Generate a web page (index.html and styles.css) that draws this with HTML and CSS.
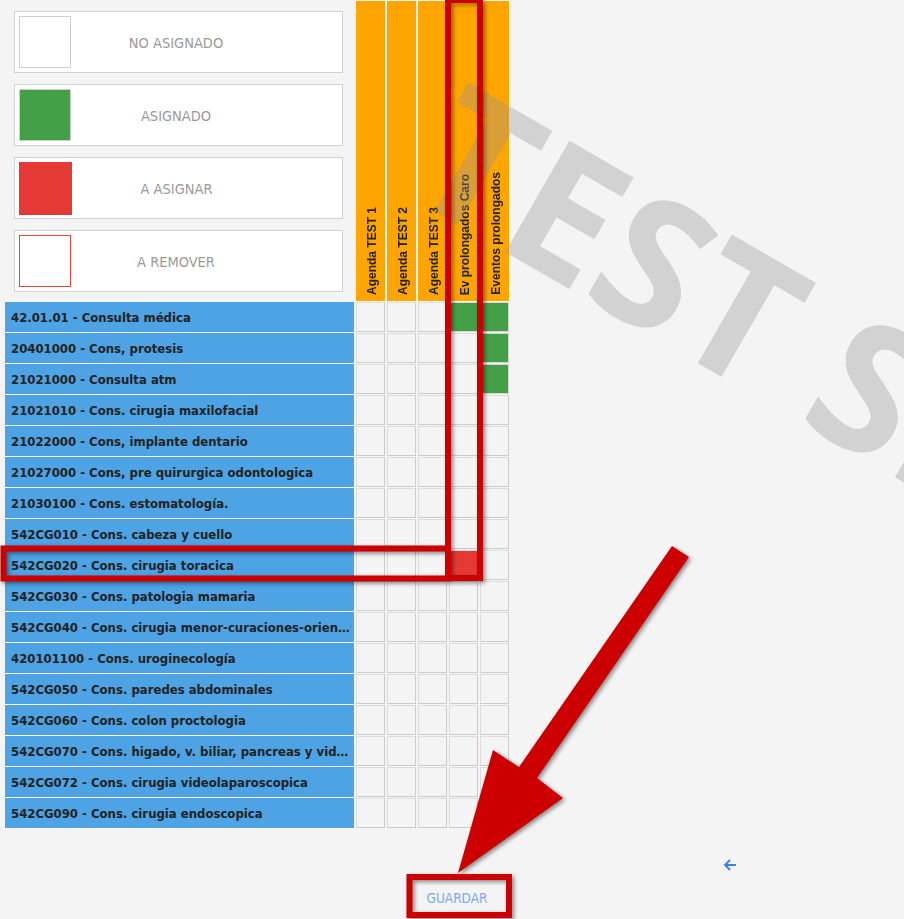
FILE: index.html
```html
<!doctype html>
<html lang="es">
    <head>
        <meta charset="UTF-8" />
        <meta name="viewport" content="width=device-width, initial-scale=1.0" />
        <title>Asignación de prestaciones</title>
        <link rel="stylesheet" href="styles.css">
    </head>
    <body>
        <div class="board">
            <div class="legend">
                <div class="legend-item">
                    <span class="swatch"></span>
                    <span class="legend-text">NO ASIGNADO</span>
                </div>
                <div class="legend-item">
                    <span class="swatch swatch-set"></span>
                    <span class="legend-text">ASIGNADO</span>
                </div>
                <div class="legend-item">
                    <span class="swatch swatch-pending"></span>
                    <span class="legend-text">A ASIGNAR</span>
                </div>
                <div class="legend-item">
                    <span class="swatch swatch-remove"></span>
                    <span class="legend-text">A REMOVER</span>
                </div>
            </div>
            <div class="agenda"><span>Agenda TEST 1</span></div>
            <div class="agenda"><span>Agenda TEST 2</span></div>
            <div class="agenda"><span>Agenda TEST 3</span></div>
            <div class="agenda"><span>Ev prolongados Caro</span></div>
            <div class="agenda"><span>Eventos prolongados</span></div>

            <div class="service">42.01.01 - Consulta médica</div>
            <div class="slot"></div><div class="slot"></div><div class="slot"></div><div class="slot is-set"></div><div class="slot is-set"></div>

            <div class="service">20401000 - Cons, protesis</div>
            <div class="slot"></div><div class="slot"></div><div class="slot"></div><div class="slot"></div><div class="slot is-set"></div>

            <div class="service">21021000 - Consulta atm</div>
            <div class="slot"></div><div class="slot"></div><div class="slot"></div><div class="slot"></div><div class="slot is-set"></div>

            <div class="service">21021010 - Cons. cirugia maxilofacial</div>
            <div class="slot"></div><div class="slot"></div><div class="slot"></div><div class="slot"></div><div class="slot"></div>

            <div class="service">21022000 - Cons, implante dentario</div>
            <div class="slot"></div><div class="slot"></div><div class="slot"></div><div class="slot"></div><div class="slot"></div>

            <div class="service">21027000 - Cons, pre quirurgica odontologica</div>
            <div class="slot"></div><div class="slot"></div><div class="slot"></div><div class="slot"></div><div class="slot"></div>

            <div class="service">21030100 - Cons. estomatología.</div>
            <div class="slot"></div><div class="slot"></div><div class="slot"></div><div class="slot"></div><div class="slot"></div>

            <div class="service">542CG010 - Cons. cabeza y cuello</div>
            <div class="slot"></div><div class="slot"></div><div class="slot"></div><div class="slot"></div><div class="slot"></div>

            <div class="service">542CG020 - Cons. cirugia toracica</div>
            <div class="slot"></div><div class="slot"></div><div class="slot"></div><div class="slot is-pending"></div><div class="slot"></div>

            <div class="service">542CG030 - Cons. patologia mamaria</div>
            <div class="slot"></div><div class="slot"></div><div class="slot"></div><div class="slot"></div><div class="slot"></div>

            <div class="service">542CG040 - Cons. cirugia menor-curaciones-orientacion</div>
            <div class="slot"></div><div class="slot"></div><div class="slot"></div><div class="slot"></div><div class="slot"></div>

            <div class="service">420101100 - Cons. uroginecología</div>
            <div class="slot"></div><div class="slot"></div><div class="slot"></div><div class="slot"></div><div class="slot"></div>

            <div class="service">542CG050 - Cons. paredes abdominales</div>
            <div class="slot"></div><div class="slot"></div><div class="slot"></div><div class="slot"></div><div class="slot"></div>

            <div class="service">542CG060 - Cons. colon proctologia</div>
            <div class="slot"></div><div class="slot"></div><div class="slot"></div><div class="slot"></div><div class="slot"></div>

            <div class="service">542CG070 - Cons. higado, v. biliar, pancreas y videolaparoscopia</div>
            <div class="slot"></div><div class="slot"></div><div class="slot"></div><div class="slot"></div><div class="slot"></div>

            <div class="service">542CG072 - Cons. cirugia videolaparoscopica</div>
            <div class="slot"></div><div class="slot"></div><div class="slot"></div><div class="slot"></div><div class="slot"></div>

            <div class="service">542CG090 - Cons. cirugia endoscopica</div>
            <div class="slot"></div><div class="slot"></div><div class="slot"></div><div class="slot"></div><div class="slot"></div>
        </div>

        <div class="back-row">
            <a class="back-link" href="#">
                <svg width="14" height="14" viewBox="0 0 14 14">
                    <path d="M13 7H2M7 2 2 7l5 5" fill="none" stroke="currentColor" stroke-width="2" />
                </svg>
            </a>
        </div>
        <div class="save-row">
            <button type="button" class="save-btn">GUARDAR</button>
        </div>

        <!-- environment watermark -->
        <svg class="watermark" width="904" height="919">
            <text x="401" y="192" transform="rotate(30 401 192)">TEST SERVER</text>
        </svg>

        <!-- red callouts -->
        <svg class="callouts" width="904" height="919">
            <rect x="448" y="0" width="32" height="578" />
            <rect x="3.5" y="548.5" width="444.5" height="30" />
            <rect x="409.5" y="877" width="99.5" height="38" />
            <polygon class="arrow" points="458,873 493,750 519,767 672,546 689,557 537,778 563,798" />
        </svg>
    </body>
</html>
```

FILE: styles.css
```css
* {
    margin: 0;
    padding: 0;
    box-sizing: border-box;
}

body {
    font-family: "DejaVu Sans Condensed", "DejaVu Sans", sans-serif;
    background: #f4f4f4;
    width: 904px;
    height: 919px;
    overflow: hidden;
    position: relative;
}

.board {
    display: grid;
    grid-template-columns: 349px repeat(5, 29px);
    grid-template-rows: 301px;
    grid-auto-rows: 31px;
    column-gap: 2px;
    margin: 1px 0 0 5px;
    width: max-content;
}

/* legend */

.legend {
    padding: 10px 11px 0 9px;
    display: flex;
    flex-direction: column;
    gap: 11px;
}

.legend-item {
    height: 62px;
    background: #ffffff;
    border: 1px solid #d2d2d2;
    padding: 4px;
    display: flex;
    align-items: center;
}

.swatch {
    width: 52px;
    height: 52px;
    flex: none;
    background: #ffffff;
    border: 1px solid #cfcfcf;
}

.swatch-set {
    background: #43a047;
}

.swatch-pending {
    background: #e53935;
    border-color: #e53935;
    width: 53px;
    height: 53px;
}

.swatch-remove {
    border-color: #f44336;
}

.legend-text {
    flex: 1;
    text-align: center;
    padding: 2px 57px 0 0;
    font-size: 14.5px;
    color: #9a9a9a;
}

/* agenda headers */

.agenda {
    height: 300px;
    background: #ffa500;
    display: flex;
    justify-content: center;
    align-items: flex-end;
    padding: 0 0 6px 2px;
}

.agenda span {
    writing-mode: vertical-rl;
    transform: rotate(180deg);
    font-family: "Liberation Sans", Arial, sans-serif;
    font-weight: bold;
    font-size: 12px;
    color: #222222;
    white-space: nowrap;
}

/* rows */

.service {
    background: #4da3e4;
    border-bottom: 1px solid #ffffff;
    color: #222222;
    font-weight: bold;
    font-size: 13px;
    line-height: 31px;
    padding: 0 3px 0 6px;
    white-space: nowrap;
    overflow: hidden;
    text-overflow: ellipsis;
}

.slot {
    height: 30px;
    background: #f4f4f4;
    border: 1px solid;
    border-color: #dddddd #cccccc #cccccc #dddddd;
}

.slot.is-set {
    background: #43a047;
    border-color: #d8d8d8;
}

.slot.is-pending {
    background: #e53935;
    border-color: #d8d8d8;
}

/* footer actions */

.back-row {
    display: flex;
    justify-content: flex-end;
    padding-right: 167px;
    margin-top: 29px;
}

.back-link {
    display: block;
    width: 14px;
    height: 14px;
    color: #3b7ff2;
}

.back-link svg {
    display: block;
}

.save-row {
    display: flex;
    justify-content: center;
    padding-left: 10px;
    margin-top: 18px;
}

.save-btn {
    border: none;
    background: none;
    font-family: inherit;
    font-size: 13.5px;
    line-height: 16px;
    color: #7aa9f5;
    cursor: pointer;
}

/* overlays */

.watermark,
.callouts {
    position: absolute;
    left: 0;
    top: 0;
    pointer-events: none;
}

.watermark text {
    font-family: "Open Sans", sans-serif;
    font-weight: 700;
    font-size: 180px;
    fill: rgba(150, 150, 150, 0.36);
}

.callouts {
    filter: drop-shadow(2px 2px 2px rgba(0, 0, 0, 0.45));
}

.callouts rect {
    fill: none;
    stroke: #cc0000;
    stroke-width: 6;
}

.callouts .arrow {
    fill: #cc0000;
}
```
